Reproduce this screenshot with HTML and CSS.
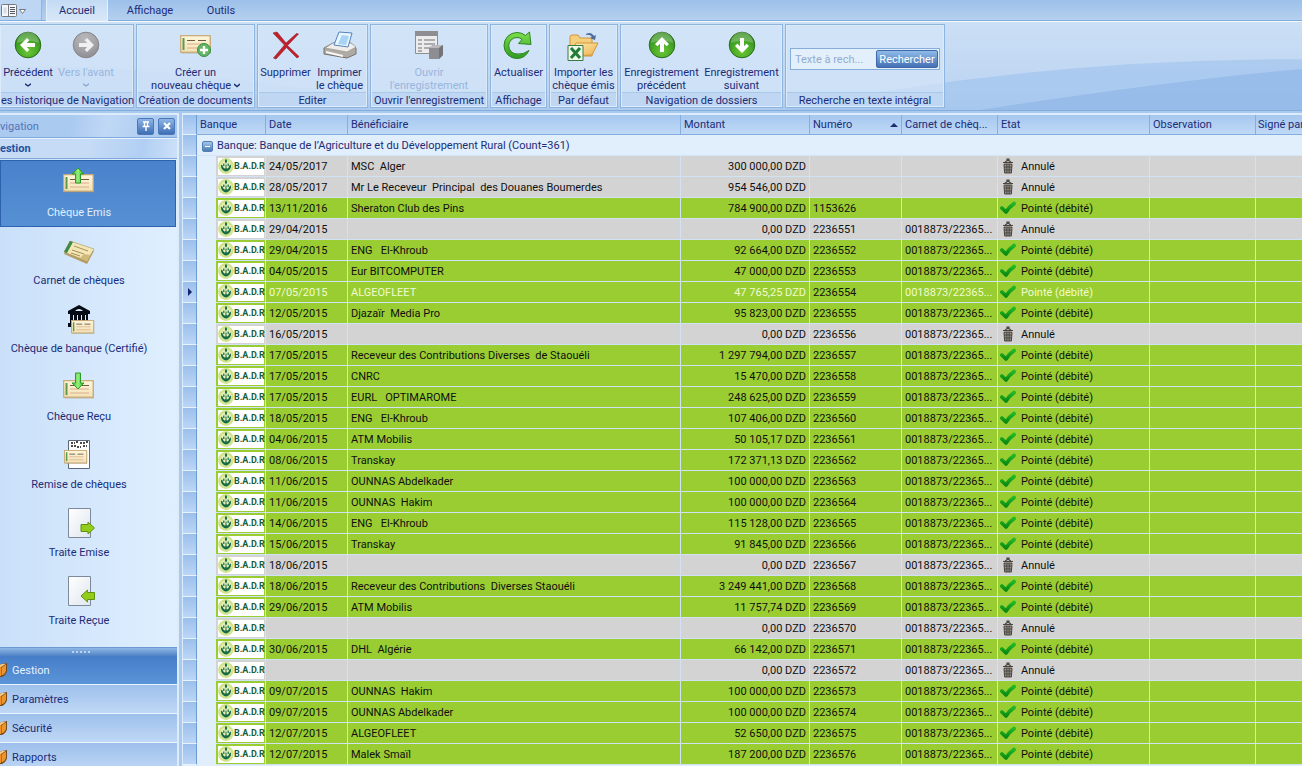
FILE: index.html
```html
<!DOCTYPE html>
<html lang="fr">
<head>
<meta charset="utf-8">
<title>Chèque Emis</title>
<link rel="stylesheet" href="styles.css">
</head>
<body>
<svg class="defs" aria-hidden="true">
  <defs>
    <radialGradient id="green" cx=".5" cy=".75" r=".8"><stop offset="0" stop-color="#6cc636"/><stop offset=".5" stop-color="#46a825"/><stop offset="1" stop-color="#2a7d18"/></radialGradient>
    <radialGradient id="grey" cx=".45" cy=".25" r=".8"><stop offset="0" stop-color="#b9b9bc"/><stop offset=".6" stop-color="#a2a2a6"/><stop offset="1" stop-color="#8a8a8e"/></radialGradient>
    <linearGradient id="arrow" x2="1" y2="0"><stop offset="0" stop-color="#35b52c"/><stop offset=".5" stop-color="#98f07c"/><stop offset="1" stop-color="#2da626"/></linearGradient>
    <linearGradient id="paper" x2="0" y2="1"><stop offset="0" stop-color="#fff6da"/><stop offset="1" stop-color="#f2e2b4"/></linearGradient>
    <linearGradient id="sheet" x2="1" y2="1"><stop offset="0" stop-color="#ffffff"/><stop offset="1" stop-color="#dfe6ee"/></linearGradient>
    <linearGradient id="folder" x2="1" y2="1"><stop offset="0" stop-color="#fff0b8"/><stop offset="1" stop-color="#eeb04a"/></linearGradient>
    <linearGradient id="tick" x2="0" y2="1"><stop offset="0" stop-color="#22b824"/><stop offset="1" stop-color="#0a8a12"/></linearGradient>
    <linearGradient id="refresh" x2="0" y2="1"><stop offset="0" stop-color="#7fe04c"/><stop offset="1" stop-color="#2d9a22"/></linearGradient>
    <symbol id="cheque" viewBox="0 0 32 20"><rect x="1.5" y="1.5" width="29.500" height="17" fill="#9b8f6c" opacity=".5"/><rect x=".7" y=".7" width="29.500" height="16.500" fill="url(#paper)" stroke="#c9a874" stroke-width="1.200"/><rect x="2.500" y="3" width="2" height="12" fill="#5c9a50"/><path d="M7 5.500h8m3 0h8" stroke="#6d5a48" stroke-width="1.200"/><path d="M7 9h19M7 13h19" stroke="#d8a58a" stroke-width=".9"/></symbol>
    <symbol id="disc" viewBox="0 0 28 28"><circle cx="14" cy="14" r="12.800" fill="url(#green)" stroke="#2b6e1c"/><path d="M3 12a11 11 0 0 1 22 0q-11-5-22 0" fill="#fff" opacity=".25"/></symbol>
    <symbol id="bin" viewBox="0 0 12 16"><path d="M1 4.500h10M3 4l3-1.800 3 1.800M5 2.300V1h2v1.300" fill="none" stroke="#4a4640" stroke-width="1.200"/><path d="M2 6h8l-.6 9H2.600z" fill="#a09b94" stroke="#4a4640"/><path d="M4.300 6v9M6 6v9M7.700 6v9M2 9h8M2.300 12h7.400" stroke="#3a3732" stroke-width=".7"/></symbol>
    <symbol id="check" viewBox="0 0 16 14"><path d="M1.900 7 6 11Q9.500 5.500 14 2.600" fill="none" stroke="url(#tick)" stroke-width="3.800" stroke-linecap="round" stroke-linejoin="round"/></symbol>
    <symbol id="emblem" viewBox="0 0 16 16"><circle cx="8" cy="8" r="7.900" fill="#d0e48c"/><circle cx="8" cy="8" r="5.500" fill="#e6efb8"/><path d="M8 1q2.200 2 0 4.500Q5.800 3 8 1zM3 6.500q2 .5 2.400 3Q6.300 10.800 7.500 10.300V6.500h1v3.800q1.200.5 2.100-.8.400-2.500 2.400-3 .2 4.500-2.500 6Q8 14.300 5.500 12.500 2.800 11 3 6.500z" fill="#176b45"/><path d="M5.800 5.500v2.500M10.200 5.500v2.500" stroke="#176b45" stroke-width="1.200"/></symbol>
    <symbol id="brick" viewBox="0 0 14 16"><path d="M0 5 8 2l5-1v8q-1 4-5 6H0z" fill="#7a4a16"/><path d="M0 6 7 5v9H0z" fill="#f0922c"/><path d="m0 5 8-3 4-.2L7 5z" fill="#fbc97e"/><path d="m7.500 5.500 4.500-3v6q-1 4-4.500 5z" fill="#ec9430"/></symbol>
  </defs>
</svg>

<header class="top">
  <nav class="tabs">
    <button class="appmenu" aria-label="Menu"><svg width="28" height="18" viewBox="0 0 28 18"><rect x="1.500" y="3.500" width="15" height="12" rx="1" fill="#f4f7fb" stroke="#75797f"/><path d="M8.500 4v11" stroke="#75797f"/><path d="M10 6.500h5m-5 2h5m-5 2h5m-5 2h5" stroke="#55595f"/><path d="M3.500 6.500h3v6h-3z" fill="#d6dbe2"/><path d="M19.500 8.500h6l-3 4z" fill="#fff" stroke="#75797f"/></svg></button>
    <button class="tab tab-active">Accueil</button>
    <button class="tab">Affichage</button>
    <button class="tab tab-last">Outils</button>
  </nav>
  <div class="ribbon">
    <svg class="waves" viewBox="0 0 1302 90" preserveAspectRatio="none" aria-hidden="true"><path d="M0 45Q120 44 260 62T560 90H0z" fill="#a9c8ee" opacity=".4"/><path d="M780 90Q1030 38 1302 38V90z" fill="#a4c6ee" opacity=".75"/><path d="M980 90Q1170 60 1302 48V90z" fill="#93b9e9" opacity=".8"/></svg>

    <section class="group g-history">
      <div class="tools">
        <button class="tool"><svg width="28" height="28"><use href="#disc"/><path d="m6 14 7-7 2.300 2.300L12.800 12H21v4h-8.200l2.500 2.700L13 21z" fill="#fff"/></svg><span>Précédent</span><svg class="chev" width="6" height="4"><path d="M0 .8 3 3 6 .8" fill="none" stroke="#1c2c6c" stroke-width="1.400"/></svg></button>
        <button class="tool tool-off" disabled><svg width="28" height="28"><circle cx="14" cy="14" r="12.800" fill="url(#grey)" stroke="#87878b"/><path d="m22 14-7-7-2.300 2.300 2.500 2.700H7v4h8.200l-2.500 2.700L15 21z" fill="#f0f0f0"/></svg><span>Vers l'avant</span><svg class="chev" width="6" height="4"><path d="M0 .8 3 3 6 .8" fill="none" stroke="#8ba7d0" stroke-width="1.400"/></svg></button>
      </div>
      <h2>es historique de Navigation</h2>
    </section>
    <section class="group g-create">
      <div class="tools">
        <button class="tool"><svg width="32" height="32"><use href="#cheque" y="5" width="32" height="20"/><circle cx="24" cy="20" r="6.500" fill="#62b763" stroke="#3b8c45"/><path d="M24 16v8m-4-4h8" stroke="#fff" stroke-width="2.400"/></svg><span>Créer un<br>nouveau chèque <svg width="6" height="6"><path d="M0 1 3 3.500 6 1" fill="none" stroke="#1c2c6c" stroke-width="1.400"/></svg></span></button>
      </div>
      <h2>Création de documents</h2>
    </section>
    <section class="group g-edit">
      <div class="tools">
        <button class="tool"><svg width="28" height="32"><path d="m1 3 4-1 9 11L24.500 3.500l2 .5-11 11.500L27 26.500 25 28 14.500 17.500 4 29l-2.500-1L12.500 15z" fill="#c4202a" stroke="#8e1720" stroke-width=".6"/></svg><span>Supprimer</span></button>
        <button class="tool"><svg width="34" height="32"><path d="m1 18 9-5h18l5 5v6l-9 4L1 24z" fill="#aeaba4" stroke="#77736c"/><path d="m2 18 8-5h18l5 4-9 5z" fill="#efeeea" stroke="#99958d" stroke-width=".7"/><path d="m11 15 5-13 13 1-4 14z" fill="#e9f6ff" stroke="#5682ba"/><path d="m15 14 4-9 7 1-3 9z" fill="#a7d3f5"/><path d="m3 21 17 4v2L3 23z" fill="#f9f9f7"/></svg><span>Imprimer<br>le chèque</span></button>
      </div>
      <h2>Editer</h2>
    </section>
    <section class="group g-open">
      <div class="tools">
        <button class="tool tool-off" disabled><svg width="30" height="32"><path d="M1.500 1.500h22v22h-22z" fill="#ececee" stroke="#8f8f93"/><path d="M1 1h23v5H1z" fill="#8e8e92"/><path d="M4 10h4m2 0h11M4 14h4m2 0h11M4 18h4m2 0h11M4 21h4" stroke="#98989c" stroke-width="1.400"/><path d="m15 18 4-3h10v10l-4 4H15z" fill="#8e8e92"/><path d="m15 18 4-3h10l-4 3z" fill="#b9b9bd"/><path d="m25 18 4-3v10l-4 4z" fill="#747478"/></svg><span>Ouvrir<br>l'enregistrement</span></button>
      </div>
      <h2>Ouvrir l'enregistrement</h2>
    </section>
    <section class="group g-view">
      <div class="tools">
        <button class="tool"><svg width="30" height="32"><path d="M26 20.500Q22 28.500 14 28.500A13 13 0 0 1 14 2.500q5 0 8.500 3L26.500 2 28 14.500 15.500 13.500 19 9.500Q17 7.500 14 7.500a8 8 0 0 0 0 16.500q6 1 12-3.500z" fill="url(#refresh)" stroke="#2e8524"/></svg><span>Actualiser</span></button>
      </div>
      <h2>Affichage</h2>
    </section>
    <section class="group g-default">
      <div class="tools">
        <button class="tool"><svg width="32" height="32"><path d="M3 7q0-2 2-2h6l2 3h12v18H3z" fill="#f6cf7c" stroke="#cf953c"/><path d="m3 26 6-13h22l-6 12z" fill="url(#folder)" stroke="#cf953c"/><path d="M19 4q5-3 8 2l2-1-1 5-5-2 2-1q-2-3-6-2z" fill="#4d6b9b"/><path d="M1 15.500h15v15H1z" fill="#eef8ec" stroke="#3c7a3c"/><path d="m4 18 9 10M13 18 4 28" stroke="#217b35" stroke-width="3"/></svg><span>Importer les<br>chèque émis</span></button>
      </div>
      <h2>Par défaut</h2>
    </section>
    <section class="group g-records">
      <div class="tools">
        <button class="tool"><svg width="28" height="28"><use href="#disc"/><path d="m14 6 7 7-2.300 2.300-2.700-2.500V21h-4v-8.200l-2.700 2.500L7 13z" fill="#fff"/></svg><span>Enregistrement<br>précédent</span></button>
        <button class="tool"><svg width="28" height="28"><use href="#disc"/><path d="m14 22 7-7-2.300-2.300-2.700 2.500V7h-4v8.200l-2.700-2.500L7 15z" fill="#fff"/></svg><span>Enregistrement<br>suivant</span></button>
      </div>
      <h2>Navigation de dossiers</h2>
    </section>
    <section class="group g-search">
      <div class="tools">
        <form class="search">
          <input type="text" placeholder="Texte à rech..." aria-label="Texte à rechercher">
          <button type="button">Rechercher</button>
        </form>
      </div>
      <h2>Recherche en texte intégral</h2>
    </section>
  </div>
</header>

<main class="work">
  <aside class="side">
    <div class="side-title"><span>vigation</span>
      <button aria-label="Épingler"><svg width="10" height="10"><path d="M2 1h6M3.500 1v4M6.500 1v4M1.500 5.500h7M5 6v4" fill="none" stroke="#fff" stroke-width="1.400"/></svg></button>
      <button aria-label="Fermer"><svg width="10" height="10"><path d="m2 2 6 6m0-6L2 8" stroke="#fff" stroke-width="2.200"/></svg></button>
    </div>
    <h1 class="side-group">estion</h1>
    <div class="items">
      <button class="item item-on"><svg width="32" height="32"><use href="#cheque" y="7" width="32" height="20"/><path d="m15 1 6 6h-3.500v9h-5V7H9z" fill="url(#arrow)" stroke="#2c9a2c"/></svg>Chèque Emis</button>
      <button class="item"><svg width="32" height="32"><path d="m1 19 6-12 24 9-7 13z" fill="#b49c62"/><path d="m1 17 6-11 24 8-7 12z" fill="#f4e7b6" stroke="#b3a26c" stroke-width=".7"/><path d="m1 17 6-11 3 1-6 11z" fill="#3a8b48"/><path d="m11 11 14 5m-16-1 12 4m-13-1 9 3" stroke="#a1844f" stroke-width=".9"/><path d="m17 23 4-4 6 1-3 6z" fill="#d1b979"/></svg>Carnet de chèques</button>
      <button class="item"><svg width="32" height="32"><path d="M5 8 16 2l11 6v3H5z" fill="#070b14"/><path d="M12 8q4-4 8 0z" fill="#dcecff"/><path d="M7 11h18v10H7zM5 20h12v4H5z" fill="#070b14"/><path d="M10.500 12v8M14.500 12v8M18.500 12v8M22.500 12v8" stroke="#dcecff" stroke-width="1"/><use href="#cheque" x="8" y="17" width="24" height="15"/></svg>Chèque de banque (Certifié)</button>
      <button class="item"><svg width="32" height="32"><use href="#cheque" y="9" width="32" height="20"/><path d="m15 18 6-6h-3.500V2h-5v10H9z" fill="url(#arrow)" stroke="#2c9a2c"/></svg>Chèque Reçu</button>
      <button class="item"><svg width="32" height="32"><path d="M5.500 1.500h21v28h-21z" fill="#fff" stroke="#5c6878"/><path d="M8 4h4m1-1h3m1 1h5m1-1h2M8 7h5m1 1h4m2-1h4" stroke="#111" stroke-width="1.500" stroke-dasharray="2 1"/><use href="#cheque" x="1" y="11" width="24" height="15"/></svg>Remise de chèques</button>
      <button class="item"><svg width="32" height="32"><path d="M5.500 1.500h22v29h-22z" fill="url(#sheet)" stroke="#7d8a9b"/><path d="M18 17.500h7V15l6.500 6-6.500 6v-2.500h-7z" fill="#93cc1b" stroke="#5f9210"/></svg>Traite Emise</button>
      <button class="item"><svg width="32" height="32"><path d="M5.500 1.500h22v29h-22z" fill="url(#sheet)" stroke="#7d8a9b"/><path d="M31.500 17.500h-7V15L18 21l6.500 6v-2.500h7z" fill="#93cc1b" stroke="#5f9210"/></svg>Traite Reçue</button>
    </div>
    <div class="splitter"><i></i><i></i><i></i><i></i><i></i></div>
    <nav class="sections">
      <button class="section section-on"><svg width="8" height="16" viewBox="6 0 8 16"><use href="#brick" width="14" height="16"/></svg>Gestion</button>
      <button class="section"><svg width="8" height="16" viewBox="6 0 8 16"><use href="#brick" width="14" height="16"/></svg>Paramètres</button>
      <button class="section"><svg width="8" height="16" viewBox="6 0 8 16"><use href="#brick" width="14" height="16"/></svg>Sécurité</button>
      <button class="section"><svg width="8" height="16" viewBox="6 0 8 16"><use href="#brick" width="14" height="16"/></svg>Rapports</button>
    </nav>
  </aside>

  <div class="grid">
    <table>
      <colgroup><col class="c-mark"><col class="c-indent"><col class="c-bank"><col class="c-date"><col class="c-payee"><col class="c-amount"><col class="c-number"><col class="c-book"><col class="c-state"><col class="c-note"><col></colgroup>
      <thead>
        <tr><th class="mark"></th><th colspan="2">Banque</th><th>Date</th><th>Bénéficiaire</th><th>Montant</th><th class="sorted"><span>Numéro<svg width="8" height="4"><path d="m0 4 4-4 4 4z" fill="#1c2c6c"/></svg></span></th><th>Carnet de chèq...</th><th>Etat</th><th>Observation</th><th>Signé par</th></tr>
        <tr class="bank-row"><td class="mark"></td><td colspan="10"><button class="fold" aria-label="Réduire"></button>Banque: Banque de l’Agriculture et du Développement Rural (Count=361)</td></tr>
      </thead>
      <tbody id="rows"></tbody>
    </table>
  </div>
</main>
<script src="rows.js"></script>
</body>
</html>
```
FILE: styles.css
```css
* { box-sizing: border-box; }
body {
  margin: 0;
  height: 100vh;
  display: flex;
  flex-direction: column;
  overflow: hidden;
  background: #a9c9ee;
  color: #1c2c78;
  font: 11px/13px Roboto, Tahoma, sans-serif;
}
button, input { font: inherit; color: inherit; border: 0; background: none; padding: 0; margin: 0; }
h1, h2 { margin: 0; font: inherit; }
.defs { position: absolute; width: 0; height: 0; }

.tabs {
  display: flex;
  height: 21px;
  background: linear-gradient(#9cc0ea, #b5d0ef);
  border-bottom: 1px solid #82aedc;
}
.appmenu { width: 42px; text-align: left; background: #bcd6f3; border-right: 1px solid #8fb6e2; }
.appmenu svg { display: block; }
.tab { width: 84px; }
.tab-active { width: 62px; margin: 0 0 -1px 4px; background: linear-gradient(#c3daf4, #d9e8f8); border: solid #e4f0fc; border-width: 0 1px; }
.tab-last { width: 58px; }

.ribbon {
  position: relative;
  display: flex;
  gap: 2px;
  height: 90px;
  padding: 2px 0 2px;
  border-top: 1px solid #f2f8fe;
  border-bottom: 1px solid #82aedc;
  background: linear-gradient(#cbdff5, #bdd5f2 80%, #aecbef);
}
.waves { position: absolute; inset: 0; width: 100%; height: 100%; }
.group {
  position: relative;
  display: flex;
  flex-direction: column;
  border: 1px solid #8db5e0;
  box-shadow: inset 0 0 0 1px #dcebfa;
  background: rgba(212, 230, 248, .7);
}
.group h2 { height: 14px; line-height: 15px; text-align: center; white-space: nowrap; background: #bfd7f3; margin: 0 1px 1px; border-top: 1px solid #a9c8ea; }
.tools { flex: 1; display: flex; justify-content: center; }
.g-history { width: 134px; border-left: 0; }
.g-history .tools { justify-content: flex-start; }
.g-history .tool { width: 56px; }
.g-history .tool + .tool { width: 60px; }
.g-create { width: 119px; }
.g-edit { width: 111px; }
.g-edit .tool { width: 54px; }
.g-open { width: 118px; }
.g-view { width: 57px; }
.g-default { width: 69px; }
.g-records { width: 163px; }
.g-records .tool { width: 80px; }
.g-search { width: 160px; }
.tool { display: flex; flex-direction: column; align-items: center; white-space: nowrap; padding-top: 5px; }
.tool > svg:first-child { height: 32px; flex: none; margin-bottom: 4px; }
.tool > svg[height="28"]:first-child { height: 28px; margin: 1px 0 7px; }
.chev { margin-top: 4px; }
.tool-off { color: #98b6de; }
.search { display: flex; flex: 1; min-width: 0; height: 22px; margin: 23px 4px 0; border: 1px solid #84add9; background: #e3f0fc; padding: 1px; }
.search input { flex: 1; min-width: 0; padding-left: 3px; }
.search input::placeholder { color: #92acd0; opacity: 1; }
.search button { width: 62px; color: #fff; border: 1px solid #3f69ac; border-radius: 2px; background: linear-gradient(#8fbbe9, #4470b5); }

.work { flex: 1; display: flex; min-height: 0; padding-top: 2px; gap: 3px; }
.side { width: 179px; flex: none; display: flex; flex-direction: column; border: solid #dcecfb; border-width: 2px 2px 0 0; background: linear-gradient(90deg, #cae0fa, #dfeffe); }
.side-title { display: flex; align-items: center; gap: 4px; height: 23px; padding-right: 2px; background: linear-gradient(100deg, #abcaf0 40%, #bfd8f5 60%, #a5c6ee); border-bottom: 1px solid #80a9dc; color: #5373b8; }
.side-title span { flex: 1; }
.side-title button { width: 17px; height: 17px; border: 1px solid #4a78bb; border-radius: 2px; background: linear-gradient(#8db5e6, #3f6eb4); display: grid; place-items: center; }
.side-group { height: 21px; line-height: 22px; font-weight: bold; color: #22529f; background: linear-gradient(100deg, #c5dbf6 50%, #b1cff3 80%, #cde0f8); border: solid #7fa8da; border-width: 0 0 1px; box-shadow: inset 0 1px #e6f2fe; }
.items { flex: 1; display: flex; flex-direction: column; gap: 1px; padding-top: 1px; overflow: hidden; }
.item { height: 67px; flex: none; display: flex; flex-direction: column; align-items: center; gap: 6px; padding: 6px 19px 0 0; border: 1px solid transparent; line-height: 15px; white-space: nowrap; }
.item svg { flex: none; }
.item-on { color: #e2f0ff; background: linear-gradient(#4a82cb, #5690d4); border-color: #2f62ae; margin-right: 1px; padding-right: 18px; }
.splitter { height: 9px; flex: none; display: flex; justify-content: center; align-items: center; gap: 2px; padding-right: 16px; background: linear-gradient(#90b8e8, #4f82c4); border-top: 1px solid #6c99d2; }
.splitter i { width: 2px; height: 2px; background: #b9d3f2; }
.sections { height: 110px; flex: none; overflow: hidden; display: flex; flex-direction: column; }
.section { height: 29px; flex: none; display: flex; align-items: center; gap: 4px; background: linear-gradient(#9dc0eb, #c0d8f6); border-bottom: 1px solid #eaf4ff; }
.section-on { color: #e6f2ff; background: linear-gradient(#467ec8, #5a94d8); }

.grid { flex: 1; min-width: 0; overflow: hidden; border: solid #dcecfb; border-width: 2px 0 0 1px; background: #e1eefc; }
table { width: 100%; table-layout: fixed; border-collapse: separate; border-spacing: 0; }
.c-mark { width: 14px; }
.c-indent { width: 19px; }
.c-bank { width: 50px; }
.c-date { width: 82px; }
.c-payee { width: 333px; }
.c-amount { width: 129px; }
.c-number { width: 92px; }
.c-book { width: 96px; }
.c-state { width: 152px; }
.c-note { width: 106px; }
th, td { padding: 0 3px; height: 21px; overflow: hidden; white-space: pre; text-align: left; font-weight: normal; border: solid #d0e2f4; border-width: 0 1px 1px 0; }
th { height: 20px; background: linear-gradient(#a5c7ef, #c0d9f6); border-color: #84aee0; }
th:last-child { padding: 0 0 0 2px; }
th:last-child, td:last-child { border-right: 0; }
th span { display: flex; align-items: center; justify-content: space-between; }
.mark { padding: 0; background: linear-gradient(#9bbfec, #bcd6f6); border-color: #6d9bd4; border-bottom-color: #e6f2fe; }
.mark svg { display: block; margin: 0 auto; }
.bank-row td + td { padding-left: 5px; border-bottom-color: #d4e5f7; }
.fold { width: 11px; height: 11px; margin-right: 4px; vertical-align: -2px; border: 1px solid #527fb8; border-radius: 2px; background: linear-gradient(#fff, #fff) center / 5px 1px no-repeat, linear-gradient(#a5c6ea, #4a79b5); }
tbody { color: #101010; }
.paid td { background: #9acd32; }
.void td { background: #d3d3d3; }
tbody tr .mark { background: linear-gradient(#9bbfec, #bcd6f6); }
tbody tr .indent { background: #e1eefc; border-color: #e1eefc; }
.current { color: #f1fbd0; }
.current .number { color: #101010; }
tbody .logo { padding: 1px 1px 1px 2px; }
.badr { display: flex; align-items: center; height: 17px; background: #fff; color: #155e3c; font: bold 9px/16px Roboto, sans-serif; }
.badr svg { flex: none; }
.amount { text-align: right; }
.state { padding-left: 2px; }
.state span { display: flex; align-items: center; gap: 5px; }
.state svg { width: 16px; height: 16px; }
```
FILE: rows.js
```js
const book = "0018873/22365...";
// date, payee, amount, number, paid
const cheques = [
  ["24/05/2017", "MSC  Alger", "300 000,00", "", 0],
  ["28/05/2017", "Mr Le Receveur  Principal  des Douanes Boumerdes", "954 546,00", "", 0],
  ["13/11/2016", "Sheraton Club des Pins", "784 900,00", "1153626", 1],
  ["29/04/2015", "", "0,00", "2236551", 0],
  ["29/04/2015", "ENG   El-Khroub", "92 664,00", "2236552", 1],
  ["04/05/2015", "Eur BITCOMPUTER", "47 000,00", "2236553", 1],
  ["07/05/2015", "ALGEOFLEET", "47 765,25", "2236554", 1],
  ["12/05/2015", "Djazaïr  Media Pro", "95 823,00", "2236555", 1],
  ["16/05/2015", "", "0,00", "2236556", 0],
  ["17/05/2015", "Receveur des Contributions Diverses  de Staouéli", "1 297 794,00", "2236557", 1],
  ["17/05/2015", "CNRC", "15 470,00", "2236558", 1],
  ["17/05/2015", "EURL   OPTIMAROME", "248 625,00", "2236559", 1],
  ["18/05/2015", "ENG   El-Khroub", "107 406,00", "2236560", 1],
  ["04/06/2015", "ATM Mobilis", "50 105,17", "2236561", 1],
  ["08/06/2015", "Transkay", "172 371,13", "2236562", 1],
  ["11/06/2015", "OUNNAS Abdelkader", "100 000,00", "2236563", 1],
  ["11/06/2015", "OUNNAS  Hakim", "100 000,00", "2236564", 1],
  ["14/06/2015", "ENG   El-Khroub", "115 128,00", "2236565", 1],
  ["15/06/2015", "Transkay", "91 845,00", "2236566", 1],
  ["18/06/2015", "", "0,00", "2236567", 0],
  ["18/06/2015", "Receveur des Contributions  Diverses Staouéli", "3 249 441,00", "2236568", 1],
  ["29/06/2015", "ATM Mobilis", "11 757,74", "2236569", 1],
  ["", "", "0,00", "2236570", 0],
  ["30/06/2015", "DHL  Algérie", "66 142,00", "2236571", 1],
  ["", "", "0,00", "2236572", 0],
  ["09/07/2015", "OUNNAS  Hakim", "100 000,00", "2236573", 1],
  ["09/07/2015", "OUNNAS Abdelkader", "100 000,00", "2236574", 1],
  ["12/07/2015", "ALGEOFLEET", "52 650,00", "2236575", 1],
  ["12/07/2015", "Malek Smaïl", "187 200,00", "2236576", 1]
];
const current = "2236554";
const pointer = '<svg width="4" height="8"><path d="m0 0 4 4-4 4z" fill="#14246a"/></svg>';

document.getElementById("rows").innerHTML = cheques.map(([date, payee, amount, number, paid]) => {
  const on = number === current;
  return `<tr class="${paid ? "paid" : "void"}${on ? " current" : ""}">` +
    `<td class="mark">${on ? pointer : ""}</td><td class="indent"></td>` +
    `<td class="logo"><div class="badr"><svg width="16" height="16"><use href="#emblem"/></svg>B.A.D.R</div></td>` +
    `<td>${date}</td><td>${payee}</td><td class="amount">${amount} DZD</td>` +
    `<td class="number">${number}</td><td>${number.startsWith("22") ? book : ""}</td>` +
    `<td class="state"><span><svg><use href="#${paid ? "check" : "bin"}"/></svg>${paid ? "Pointé (débité)" : "Annulé"}</span></td>` +
    `<td></td><td></td></tr>`;
}).join("");
```
